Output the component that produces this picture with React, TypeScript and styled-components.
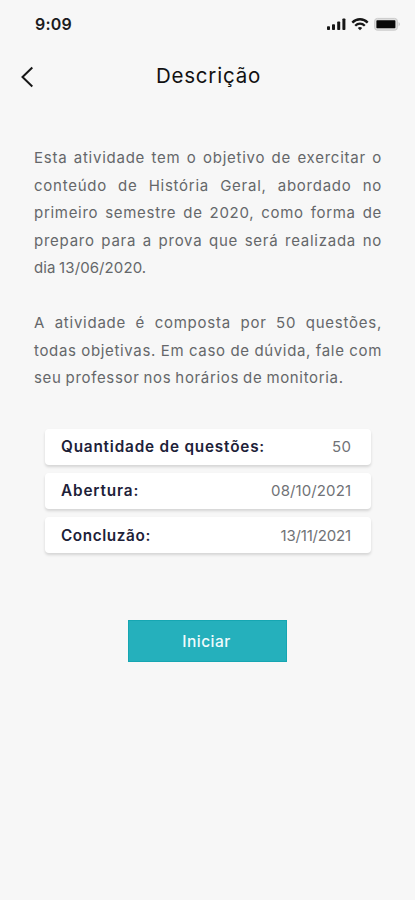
import React from "react";
import styled, { createGlobalStyle } from "styled-components";

const GlobalStyle = createGlobalStyle`
  * { box-sizing: border-box; }
  body { margin: 0; background: #f7f7f7; }
`;

const Screen = styled.main`
  width: 415px;
  height: 900px;
  overflow: hidden;
  display: flex;
  flex-direction: column;
  background: #f7f7f7;
  font-family: Inter, "Open Sans", sans-serif;
`;

const StatusBar = styled.div`
  height: 46px;
  flex: none;
  display: flex;
  align-items: center;
  justify-content: space-between;
  padding: 1px 13px 0 35px;
`;

const Time = styled.span`
  font-size: 16px;
  font-weight: 600;
  line-height: 20px;
  letter-spacing: 0.2px;
  color: #1c1c1e;
`;

const StatusIcons = styled.svg`
  display: block;
  width: 76px;
  height: 16px;
`;

const Header = styled.header`
  height: 60px;
  flex: none;
  display: grid;
  grid-template-columns: 60px 1fr 60px;
  align-items: center;
`;

const BackButton = styled.button`
  border: 0;
  padding: 2px 0 0 20px;
  background: none;
  display: flex;
`;

const Title = styled.h1`
  margin: 0;
  padding-left: 2px;
  text-align: center;
  font-size: 20.5px;
  font-weight: 400;
  line-height: 28px;
  letter-spacing: 0.8px;
  color: #111;
`;

const Description = styled.section`
  margin: 38px 33px 0 34px;
  display: flex;
  flex-direction: column;
  gap: 27.5px;
`;

const Paragraph = styled.p`
  margin: 0;
`;

const Line = styled.span<{ $spacing: number; $last?: boolean }>`
  display: block;
  height: 27.5px;
  white-space: nowrap;
  font-size: 15px;
  line-height: 27.5px;
  letter-spacing: ${(p) => p.$spacing}px;
  word-spacing: -0.8px;
  text-align-last: ${(p) => (p.$last ? "left" : "justify")};
  color: #65676a;
`;

const Details = styled.dl`
  margin: 37px 44px 0 45px;
  display: flex;
  flex-direction: column;
  gap: 8.3px;
`;

const DetailCard = styled.div`
  height: 36px;
  padding: 1px 20px 0 16px;
  display: flex;
  align-items: center;
  justify-content: space-between;
  background: #fff;
  border-radius: 4px;
  box-shadow: 0 2px 3px rgba(0, 0, 0, 0.14);
  line-height: 20px;
`;

const Label = styled.dt<{ $spacing: number }>`
  font-size: 15.3px;
  font-weight: 600;
  letter-spacing: ${(p) => p.$spacing}px;
  color: #1d2138;
`;

const Value = styled.dd<{ $spacing: number }>`
  margin: 0;
  font-size: 15px;
  letter-spacing: ${(p) => p.$spacing}px;
  margin-right: ${(p) => -p.$spacing}px;
  color: #707276;
`;

const StartButton = styled.button`
  align-self: center;
  width: 159px;
  height: 42px;
  margin: 67px 0 0;
  padding: 0 2px 0 0;
  border: 1px solid #16a6b2;
  background: #25b0bc;
  color: #f0fbfc;
  font-family: inherit;
  font-size: 15.5px;
  font-weight: 500;
  letter-spacing: 0.5px;
`;

const paragraphs = [
  [
    { text: "Esta atividade tem o objetivo de exercitar o", spacing: 0.75 },
    { text: "conteúdo de História Geral, abordado no", spacing: 0.75 },
    { text: "primeiro semestre de 2020, como forma de", spacing: 0.7 },
    { text: "preparo para a prova que será realizada no", spacing: 0.75 },
    { text: "dia 13/06/2020.", spacing: 0.1, last: true },
  ],
  [
    { text: "A atividade é composta por 50 questões,", spacing: 0.75 },
    { text: "todas objetivas. Em caso de dúvida, fale com", spacing: 0.65 },
    { text: "seu professor nos horários de monitoria.", spacing: 0.66, last: true },
  ],
];

const details = [
  { label: "Quantidade de questões:", value: "50", labelSpacing: 0.82, valueSpacing: 0.3 },
  { label: "Abertura:", value: "08/10/2021", labelSpacing: 0.86, valueSpacing: 0.1 },
  { label: "Concluzão:", value: "13/11/2021", labelSpacing: 0.6, valueSpacing: -0.2 },
];

export default function App() {
  return (
    <>
      <GlobalStyle />
      <Screen>
        <StatusBar>
          <Time>9:09</Time>
          <StatusIcons viewBox="0 0 76 16" aria-hidden="true">
            <g fill="#171717">
              <rect x="1" y="10.3" width="3" height="3.7" rx="0.8" />
              <rect x="6" y="8.3" width="3" height="5.7" rx="0.8" />
              <rect x="11.2" y="5.5" width="3" height="8.5" rx="0.8" />
              <rect x="16.4" y="2.5" width="3" height="11.5" rx="0.8" />
            </g>
            <g fill="none" stroke="#171717" strokeWidth="2.3">
              <path d="M26.3 6.6C30.6 2.1 37.4 2.1 41.7 6.6" />
              <path d="M29.2 9.8C32 7 36 7 38.8 9.8" />
            </g>
            <path d="M31.8 12Q34 10.2 36.2 12L34 14.2Z" fill="#171717" />
            <rect x="48.6" y="2.4" width="22.8" height="11.8" rx="2.8" fill="#dedede" stroke="#cbcbcb" strokeWidth="1" />
            <rect x="50.4" y="4.3" width="19" height="8" rx="0.8" fill="#080808" />
            <path d="M72.6 6Q75.2 8.2 72.6 10.4Z" fill="#c4c4c4" />
          </StatusIcons>
        </StatusBar>
        <Header>
          <BackButton aria-label="Voltar">
            <svg width="15" height="24" viewBox="0 0 15 24" fill="none" stroke="#171717" strokeWidth="2">
              <path d="M12.3 2.5L2.5 12L12.3 21.5" />
            </svg>
          </BackButton>
          <Title>Descrição</Title>
        </Header>
        <Description>
          {paragraphs.map((lines, i) => (
            <Paragraph key={i}>
              {lines.map((line) => (
                <Line key={line.text} $spacing={line.spacing} $last={line.last}>
                  {line.text}
                </Line>
              ))}
            </Paragraph>
          ))}
        </Description>
        <Details>
          {details.map((d) => (
            <DetailCard key={d.label}>
              <Label $spacing={d.labelSpacing}>{d.label}</Label>
              <Value $spacing={d.valueSpacing}>{d.value}</Value>
            </DetailCard>
          ))}
        </Details>
        <StartButton>Iniciar</StartButton>
      </Screen>
    </>
  );
}
